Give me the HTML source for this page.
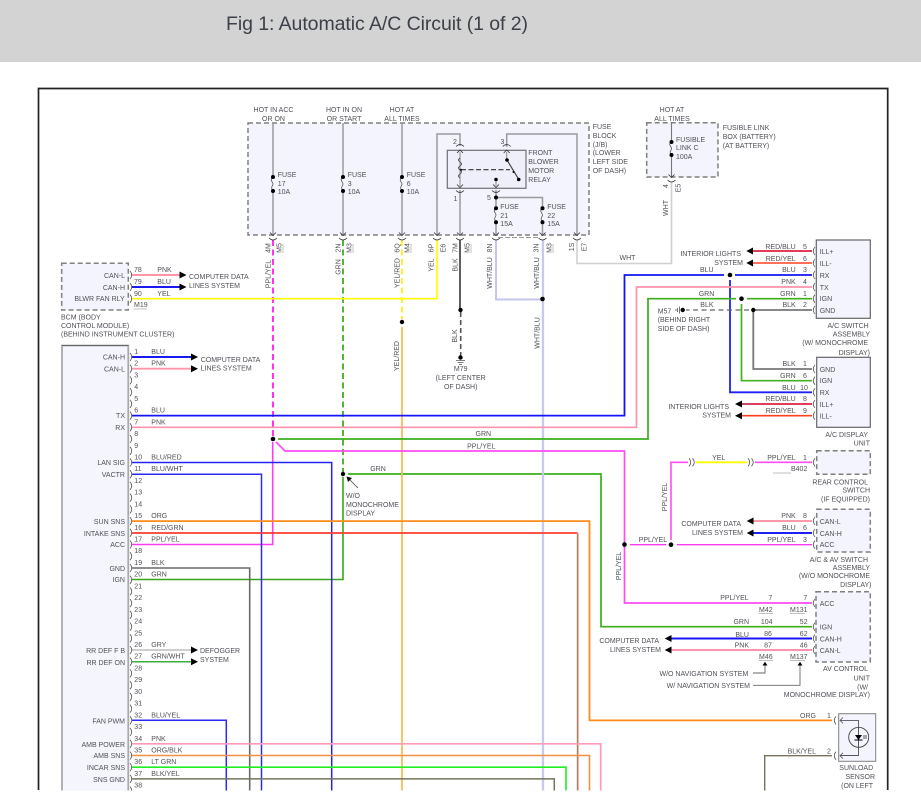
<!DOCTYPE html>
<html><head><meta charset="utf-8"><title>Fig 1: Automatic A/C Circuit (1 of 2)</title>
<style>
html,body{margin:0;padding:0;background:#fff;width:921px;height:811px;overflow:hidden}
svg{display:block;position:absolute;left:0;top:0}
text{font-family:"Liberation Sans",Arial,sans-serif;font-size:7px;fill:#505058}
.r{text-anchor:end}.m{text-anchor:middle}
.t{font-size:19.5px;fill:#3c4048}
path,line,polyline{fill:none}
.g{stroke:#9a9a9e;stroke-width:1.5}
.k{stroke:#333;stroke-width:.8}
.c{stroke:#555;stroke-width:.8}
.d{stroke:#808080;stroke-width:1.5;stroke-dasharray:5 3}
.f{fill:#000;stroke:none}
.u{stroke:#aaa;stroke-width:.7}
.b{filter:blur(.3px)}
</style></head><body>
<svg width="921" height="811" viewBox="0 0 921 811" xmlns="http://www.w3.org/2000/svg">
<rect x="0" y="0" width="921" height="62" fill="#d3d3d3"/>
<text class="t" x="226" y="30" textLength="302">Fig 1: Automatic A/C Circuit (1 of 2)</text>
<g class="b">
<path d="M38.5 790V88.5H887.7V790" stroke="#222" stroke-width="1.7"/>

<!-- boxes -->
<rect x="248" y="123" width="341" height="112" class="d" style="fill:#f3f4fd"/>
<rect x="646.7" y="122.7" width="71.3" height="54.3" class="d" style="fill:#f3f4fd"/>
<rect x="61.7" y="263.3" width="66.6" height="46.7" class="d" style="fill:#f3f4fd"/>
<rect x="62" y="345.5" width="66.3" height="446" style="fill:#f4f5fd;stroke:none"/>
<path d="M62 791V345.5H128.3V791" stroke="#a8a8ae" stroke-width="1.8"/>
<path d="M62 345.5H128.3" stroke="#666" stroke-width="1"/>
<rect x="447.3" y="150.3" width="78.7" height="38" style="fill:#eeeffa;stroke:#707074;stroke-width:1.2"/>
<rect x="816.3" y="240" width="54" height="78.3" style="fill:#f3f4fd;stroke:#66666a;stroke-width:1.2"/>
<rect x="816.7" y="357.3" width="53.6" height="70" style="fill:#f3f4fd;stroke:#66666a;stroke-width:1.2"/>
<rect x="816.7" y="450.7" width="53.6" height="23.6" class="d" style="fill:#f3f4fd"/>
<rect x="816.7" y="509.3" width="53.6" height="42.7" class="d" style="fill:#f3f4fd"/>
<rect x="816" y="591.7" width="54.3" height="70.3" class="d" style="fill:#f3f4fd"/>
<rect x="838.7" y="713.7" width="37" height="47.6" style="fill:#f3f4fd;stroke:#808084;stroke-width:1"/>

<!-- fuse block internal wires -->
<path class="g" d="M273 123V235M343 123V235M402 123V235M437 235V134H460V146M506.7 147V134H577V235M460 190V235M496 190V235M496 197.5H542.5V235"/>
<path d="M671.5 123V177" stroke="#77777b" stroke-width="1.1"/>
<path d="M460 152V186" stroke="#888" stroke-width="1"/>
<path d="M460 158q-3 2 0 4q3 2 0 4q-3 2 0 4q3 2 0 4q-3 2 0 4" stroke="#555" stroke-width="1"/>
<path d="M461 169.7H510" stroke="#333" stroke-width="1.2" stroke-dasharray="5 2.5"/>
<path d="M507 160L518.7 179.3" stroke="#444" stroke-width="1.2"/>
<path d="M506.7 152V160M496 180V186" stroke="#888" stroke-width="1"/>
<circle class="f" cx="507" cy="160" r="1.8"/><circle class="f" cx="518.7" cy="179.5" r="1.8"/><circle class="f" cx="496" cy="179.5" r="1.8"/><circle class="f" cx="513.5" cy="172" r="1"/><circle class="f" cx="461" cy="169.7" r="1"/>

<!-- fuses -->
<path fill="none" stroke="#f3f4fd" stroke-width="2" d="M273 179V189M343 179V189M402 179V189M496 210V220M542.5 210V220M671.5 144V153"/>
<path class="c" stroke-width="1" d="M273 177c-4 3 0 5 0 7s-3 3 0 7M343 177c-4 3 0 5 0 7s-3 3 0 7M402 177c-4 3 0 5 0 7s-3 3 0 7M496 208c-4 3 0 5 0 7s-3 3 0 7M542.5 208c-4 3 0 5 0 7s-3 3 0 7M671.5 142c-4 3 0 4 0 6.5s-3 3 0 6.5"/>
<circle class="f" cx="273" cy="177" r="2"/><circle class="f" cx="273" cy="191" r="2"/>
<circle class="f" cx="343" cy="177" r="2"/><circle class="f" cx="343" cy="191" r="2"/>
<circle class="f" cx="402" cy="177" r="2"/><circle class="f" cx="402" cy="191" r="2"/>
<circle class="f" cx="496" cy="197.5" r="2"/><circle class="f" cx="496" cy="208.3" r="2"/><circle class="f" cx="496" cy="222.3" r="2"/>
<circle class="f" cx="542.5" cy="208.3" r="2"/><circle class="f" cx="542.5" cy="222.3" r="2"/>
<circle class="f" cx="671.5" cy="142" r="2"/><circle class="f" cx="671.5" cy="155" r="2"/>

<!-- wires -->
<path d="M577 240V263.5H671.5V182" stroke="#d0d0d0" stroke-width="1.6"/>
<path d="M460 240V309" stroke="#555" stroke-width="1.9"/>
<path d="M460.7 312V356" stroke="#555" stroke-width="1.6" stroke-dasharray="5 3"/>
<circle class="f" cx="460.5" cy="310" r="2.2"/><circle class="f" cx="460.5" cy="357.5" r="2.2"/>
<path d="M456 360.5H465M457.5 362.5H463.5M459 364.5H462" stroke="#555" stroke-width=".8"/>
<path d="M273 240V436" stroke="#ff2af0" stroke-width="1.9" stroke-dasharray="6 3.5"/>
<path d="M272.7 442V544.5H132" stroke="#ff3cf0" stroke-width="1.6"/>
<path d="M343 240V472" stroke="#3aa51a" stroke-width="1.7" stroke-dasharray="6 3.5"/>
<path d="M343 477V579.5H132" stroke="#3aa51a" stroke-width="1.6"/>
<path d="M348 474H601V626.7H812" stroke="#3cae1c" stroke-width="1.7"/>
<circle class="f" cx="343" cy="474" r="2.2"/>
<path d="M132 462.5H331.7V791" stroke="#2424f0" stroke-width="1.5"/>
<path d="M132 474.2H261.5V791" stroke="#2a2af0" stroke-width="1.5"/>
<path d="M402 240V319" stroke="#ffee10" stroke-width="1.7" stroke-dasharray="6 3.5"/>
<path d="M402 327V791" stroke="#ffb850" stroke-width="1.7"/>
<circle class="f" cx="402" cy="322" r="2.2"/>
<path d="M132 298.7H437V240" stroke="#ffff00" stroke-width="1.7"/>
<path d="M496 240V299.5H541" stroke="#c4c4ee" stroke-width="1.9"/>
<path d="M543 240V791" stroke="#c8c8f2" stroke-width="2.3"/>
<circle class="f" cx="542.5" cy="299" r="2.3"/>
<path d="M498 237.5H540" stroke="#999" stroke-width="1" stroke-dasharray="5 2"/>
<path d="M132 415.6H624.5V275H724" stroke="#1414f5" stroke-width="1.8"/>
<path d="M735 275H812" stroke="#1414f5" stroke-width="1.8"/>
<path d="M730 280V392.3H812" stroke="#2020f5" stroke-width="1.8"/>
<circle class="f" cx="730" cy="275" r="2.3"/>
<path d="M132 427.3H636.5V287H812" stroke="#ff92ac" stroke-width="1.7"/>
<path d="M278 439H648V298.7H736" stroke="#3cae1c" stroke-width="1.7"/>
<path d="M747 298.7H812" stroke="#3cae1c" stroke-width="1.7"/>
<path d="M741.5 304V380.7H812" stroke="#44b024" stroke-width="1.7"/>
<circle class="f" cx="273" cy="439" r="2.3"/><circle class="f" cx="741.5" cy="298.7" r="2.3"/>
<path d="M276 442L285 451H624.5V603H812" stroke="#ff4cf0" stroke-width="1.7"/>
<circle class="f" cx="624.5" cy="544.5" r="2.3"/>
<path d="M630 544.7H666M677 544.7H812" stroke="#ff3cf0" stroke-width="1.4"/>
<path d="M671 540V462.3H688M755 462.3H812" stroke="#ff4cf0" stroke-width="1.6"/>
<path d="M696 462.3H747" stroke="#ffff00" stroke-width="1.9"/>
<circle class="f" cx="671" cy="544.7" r="2.3"/>
<path d="M812 310H753.3V369H812" stroke="#77777b" stroke-width="1.8"/>
<path d="M749 310H686" stroke="#666" stroke-width="1.3" stroke-dasharray="5 3.5"/>
<circle class="f" cx="753.3" cy="310" r="2.2"/><circle class="f" cx="682.7" cy="310" r="2.2"/>
<path d="M679.5 306.5V313.5M677.5 308V312M676 309V311" stroke="#555" stroke-width=".8"/>
<path d="M753 251H812M753 404H812" stroke="#e02040" stroke-width="1.8"/>
<path d="M753 263H812M742 415.7H812" stroke="#ff4020" stroke-width="1.6"/>
<path d="M742 404H753" stroke="#c84868" stroke-width="2"/>
<path d="M753 521H812" stroke="#ff98a8" stroke-width="1.9"/>
<path d="M753 533H812" stroke="#2020f5" stroke-width="2.1"/>
<path d="M671 638.5H812" stroke="#1414f5" stroke-width="1.9"/>
<path d="M671 650H812" stroke="#ff92ac" stroke-width="1.9"/>
<path d="M132 521.1H589.5V720.4H832" stroke="#ff8c1a" stroke-width="1.8"/>
<path d="M132 533H577.7" stroke="#ff3c30" stroke-width="1.8"/>
<path d="M577.7 533V791" stroke="#ff9090" stroke-width="2"/>
<path d="M577.7 534V791" stroke="#5c8a50" stroke-width=".7"/>
<path d="M132 568H249.7V791" stroke="#6a6a6a" stroke-width="1.6"/>
<path d="M132 650H192" stroke="#bdbdbd" stroke-width="1.6"/>
<path d="M132 661.7H192" stroke="#3cae3c" stroke-width="1.5"/>
<path d="M132 720.3H226.3V791" stroke="#2a2af0" stroke-width="1.5"/>
<path d="M132 743.8H600.7V791" stroke="#ff9cb8" stroke-width="1.7"/>
<path d="M132 755.5H589.5V791" stroke="#f09040" stroke-width="1.6"/>
<path d="M132 767.2H566V791" stroke="#22ee22" stroke-width="1.6"/>
<path d="M132 778.9H554.3V791" stroke="#74745c" stroke-width="1.5"/>
<path d="M832 755.7H764.7V791" stroke="#77745c" stroke-width="1.4"/>
<path d="M132 275H180M132 368.7H191" stroke="#ff96a8" stroke-width="1.9"/>
<path d="M132 287H180M132 357H191" stroke="#1a1af0" stroke-width="1.9"/>

<!-- arrows -->
<path class="f" d="M179.5 271.5L186.5 275L179.5 278.5ZM179.5 283.5L186.5 287L179.5 290.5ZM191 353.5L198 357L191 360.5ZM191 365.2L198 368.7L191 372.2ZM191 646.5L198 650L191 653.5ZM191 658.2L198 661.7L191 665.2Z"/>
<path class="f" d="M746.3 251L753 247.5V254.5ZM746.3 263L753 259.5V266.5ZM735 404L742 400.5V407.5ZM735 415.7L742 412.2V419.2ZM746.7 521L753.5 517.5V524.5ZM746.7 533L753.5 529.5V536.5ZM664.7 638.5L671.5 635V642ZM664.7 650L671.5 646.5V653.5Z"/>

<!-- connectors: left pins -->
<path class="c" d="M130 353q3.5 4 0 8M130 364.7q3.5 4 0 8M130 376.4q3.5 4 0 8M130 388.2q3.5 4 0 8M130 399.9q3.5 4 0 8M130 411.6q3.5 4 0 8M130 423.3q3.5 4 0 8M130 435q3.5 4 0 8M130 446.8q3.5 4 0 8M130 458.5q3.5 4 0 8M130 470.2q3.5 4 0 8M130 481.9q3.5 4 0 8M130 493.6q3.5 4 0 8M130 505.4q3.5 4 0 8M130 517.1q3.5 4 0 8M130 528.8q3.5 4 0 8M130 540.5q3.5 4 0 8M130 552.2q3.5 4 0 8M130 564q3.5 4 0 8M130 575.7q3.5 4 0 8M130 587.4q3.5 4 0 8M130 599.1q3.5 4 0 8M130 610.8q3.5 4 0 8M130 622.6q3.5 4 0 8M130 634.3q3.5 4 0 8M130 646q3.5 4 0 8M130 657.7q3.5 4 0 8M130 669.4q3.5 4 0 8M130 681.2q3.5 4 0 8M130 692.9q3.5 4 0 8M130 704.6q3.5 4 0 8M130 716.3q3.5 4 0 8M130 728q3.5 4 0 8M130 739.8q3.5 4 0 8M130 751.5q3.5 4 0 8M130 763.2q3.5 4 0 8M130 774.9q3.5 4 0 8M130 786.6q3.5 4 0 8"/>
<path class="c" d="M130 271q3.5 4 0 8M130 283q3.5 4 0 8M130 294.7q3.5 4 0 8"/>
<!-- right pins -->
<path class="c" d="M815 247q-3.5 4 0 8M815 259q-3.5 4 0 8M815 271q-3.5 4 0 8M815 283q-3.5 4 0 8M815 294.7q-3.5 4 0 8M815 306q-3.5 4 0 8M815 365q-3.5 4 0 8M815 376.7q-3.5 4 0 8M815 388.3q-3.5 4 0 8M815 400q-3.5 4 0 8M815 411.7q-3.5 4 0 8M815 458.3q-3.5 4 0 8M815 517q-3.5 4 0 8M815 529q-3.5 4 0 8M815 540.7q-3.5 4 0 8M815 599q-3.5 4 0 8M815 622.7q-3.5 4 0 8M815 634.5q-3.5 4 0 8M815 646q-3.5 4 0 8M836 716.4q-3.5 4 0 8M836 751.7q-3.5 4 0 8"/>
<path class="c" d="M689 458.3q3.5 4 0 8M692.5 458.3q3.5 4 0 8M748 458.3q3.5 4 0 8M751.5 458.3q3.5 4 0 8"/>
<!-- fuse block connectors -->
<path class="k" d="M270 232.5l3 3 3-3M340 232.5l3 3 3-3M399 232.5l3 3 3-3M434 232.5l3 3 3-3M457 232.5l3 3 3-3M493 232.5l3 3 3-3M539.5 232.5l3 3 3-3M574 232.5l3 3 3-3M668.5 174.5l3 3 3-3"/>
<path class="k" d="M269 238q4 4 8 0M339 238q4 4 8 0M398 238q4 4 8 0M433 238q4 4 8 0M456 238q4 4 8 0M492 238q4 4 8 0M538.5 238q4 4 8 0M573 238q4 4 8 0M667.5 180q4 4 8 0"/>
<path class="k" d="M456 146.5q4-4 8 0M502.7 146.5q4-4 8 0M456 190.5q4 4 8 0M492 190.5q4 4 8 0M457 153l3-3 3 3M503.7 153l3-3 3 3M457 184.5l3 3 3-3M493 184.5l3 3 3-3"/>

<!-- sunload sensor -->
<path d="M840 720.4H858.5V755.5H840" stroke="#55555a" stroke-width=".9"/>
<path class="c" d="M843 717.5l-3 2.9 3 2.9M843 752.8l-3 2.9 3 2.9"/>
<circle cx="858.7" cy="737.3" r="10" stroke="#444" stroke-width=".9" fill="#f3f4fd"/>
<path d="M858.5 727.5V747" stroke="#444" stroke-width=".9"/>
<path class="f" d="M855 735H862L858.5 740Z"/><path d="M854.5 740H862.5" stroke="#000" stroke-width="1"/>
<path d="M864 735V739M866 735V739" stroke="#333" stroke-width=".8"/>

<!-- nav leaders -->
<path d="M753 673H765V665M753 685.3H800V665" stroke="#666" stroke-width=".9"/>
<path class="f" d="M765 661.7L767.5 665.5H762.5ZM800 661.7L802.5 665.5H797.5Z"/>
<path d="M358 488L348 478" stroke="#444" stroke-width=".8"/>
<path class="f" d="M346.5 476.5L352 478L348 482Z"/>

<!-- underlines -->
<path class="u" d="M134 309H147M773 473H791M759 613.5H773M790 613.5H805M759 660.5H773M790 660.5H805M283 244V253M353 244V253M411 244V253M471 244V253M553 244V253"/>

<!-- top texts -->
<text class="m" x="273.5" y="112">HOT IN ACC</text><text class="m" x="273.5" y="121">OR ON</text>
<text class="m" x="344" y="112">HOT IN ON</text><text class="m" x="344" y="121">OR START</text>
<text class="m" x="402" y="112">HOT AT</text><text class="m" x="402" y="121">ALL TIMES</text>
<text class="m" x="672" y="112">HOT AT</text><text class="m" x="672" y="121">ALL TIMES</text>
<text x="277.7" y="177">FUSE</text><text x="277.7" y="186">17</text><text x="277.7" y="194">10A</text>
<text x="347.7" y="177">FUSE</text><text x="347.7" y="186">3</text><text x="347.7" y="194">10A</text>
<text x="406.7" y="177">FUSE</text><text x="406.7" y="186">6</text><text x="406.7" y="194">10A</text>
<text x="528.3" y="155">FRONT</text><text x="528.3" y="164">BLOWER</text><text x="528.3" y="173">MOTOR</text><text x="528.3" y="182">RELAY</text>
<text x="453" y="144">2</text><text x="500.5" y="144">3</text><text x="453.5" y="201">1</text><text x="487" y="200">5</text>
<text x="500.3" y="209">FUSE</text><text x="500.3" y="218">21</text><text x="500.3" y="226">15A</text>
<text x="547.3" y="209">FUSE</text><text x="547.3" y="218">22</text><text x="547.3" y="226">15A</text>
<text x="592.7" y="129">FUSE</text><text x="592.7" y="138">BLOCK</text><text x="592.7" y="147">(J/B)</text><text x="592.7" y="155">(LOWER</text><text x="592.7" y="164">LEFT SIDE</text><text x="592.7" y="173">OF DASH)</text>
<text x="676" y="142">FUSIBLE</text><text x="676" y="150">LINK C</text><text x="676" y="159">100A</text>
<text x="722.7" y="130">FUSIBLE LINK</text><text x="722.7" y="139">BOX (BATTERY)</text><text x="722.7" y="148">(AT BATTERY)</text>

<!-- rotated -->
<text class="m" transform="translate(270.3,248) rotate(-90)">4M</text><text class="m" transform="translate(281.5,248) rotate(-90)">M5</text><text class="m" transform="translate(270.3,274) rotate(-90)">PPL/YEL</text>
<text class="m" transform="translate(340.3,248) rotate(-90)">2N</text><text class="m" transform="translate(351.5,248) rotate(-90)">M3</text><text class="m" transform="translate(340.3,267) rotate(-90)">GRN</text>
<text class="m" transform="translate(399.3,248) rotate(-90)">6Q</text><text class="m" transform="translate(409.5,248) rotate(-90)">M4</text><text class="m" transform="translate(399.3,273) rotate(-90)">YEL/RED</text>
<text class="m" transform="translate(433.5,248) rotate(-90)">6P</text><text class="m" transform="translate(445.5,248) rotate(-90)">E6</text><text class="m" transform="translate(433.5,265) rotate(-90)">YEL</text>
<text class="m" transform="translate(457.5,248) rotate(-90)">7M</text><text class="m" transform="translate(469.5,248) rotate(-90)">M5</text><text class="m" transform="translate(457.5,265) rotate(-90)">BLK</text>
<text class="m" transform="translate(492.2,248) rotate(-90)">8N</text><text class="m" transform="translate(492.2,273) rotate(-90)">WHT/BLU</text>
<text class="m" transform="translate(538.7,248) rotate(-90)">3N</text><text class="m" transform="translate(551.5,248) rotate(-90)">M3</text><text class="m" transform="translate(539.2,273) rotate(-90)">WHT/BLU</text>
<text class="m" transform="translate(574.2,247) rotate(-90)">1S</text><text class="m" transform="translate(586.5,247) rotate(-90)">E7</text>
<text class="m" transform="translate(399.2,356) rotate(-90)">YEL/RED</text>
<text class="m" transform="translate(457.2,336) rotate(-90)">BLK</text>
<text class="m" transform="translate(539.5,333) rotate(-90)">WHT/BLU</text>
<text class="m" transform="translate(668.2,186) rotate(-90)">4</text><text class="m" transform="translate(680.5,188) rotate(-90)">E5</text>
<text class="m" transform="translate(668.2,208) rotate(-90)">WHT</text>
<text class="m" transform="translate(667.2,497) rotate(-90)">PPL/YEL</text>
<text class="m" transform="translate(621.2,566) rotate(-90)">PPL/YEL</text>
<text class="m" x="627.5" y="260">WHT</text>

<!-- a/c switch -->
<text class="r" x="741" y="256">INTERIOR LIGHTS</text><text class="r" x="743" y="265">SYSTEM</text>
<text class="r" x="795.7" y="249">RED/BLU</text><text class="m" x="805" y="249">5</text>
<text class="r" x="795.7" y="261">RED/YEL</text><text class="m" x="805" y="261">6</text>
<text x="700" y="272">BLU</text><text class="r" x="795.7" y="272">BLU</text><text class="m" x="805" y="272">3</text>
<text class="r" x="795.7" y="284">PNK</text><text class="m" x="805" y="284">4</text>
<text x="698.7" y="296">GRN</text><text class="r" x="795.7" y="296">GRN</text><text class="m" x="805" y="296">1</text>
<text x="700.3" y="307">BLK</text><text class="r" x="795.7" y="307">BLK</text><text class="m" x="805" y="307">2</text>
<text x="819.7" y="254">ILL+</text><text x="819.7" y="266">ILL-</text><text x="819.7" y="278">RX</text><text x="819.7" y="290">TX</text><text x="819.7" y="301">IGN</text><text x="819.7" y="313">GND</text>
<text x="657.7" y="313.5">M57</text><text x="657.7" y="322">(BEHIND RIGHT</text><text x="657.7" y="331">SIDE OF DASH)</text>
<text class="r" x="868.7" y="328">A/C SWITCH</text><text class="r" x="870" y="336.5">ASSEMBLY</text><text class="r" x="868" y="345">(W/ MONOCHROME</text><text class="r" x="870" y="355">DISPLAY)</text>

<!-- a/c display -->
<text class="r" x="795.7" y="366">BLK</text><text class="m" x="805" y="366">1</text>
<text class="r" x="795.7" y="378">GRN</text><text class="m" x="805" y="378">6</text>
<text class="r" x="795.7" y="390">BLU</text><text class="m" x="804" y="390">10</text>
<text class="r" x="795.7" y="401">RED/BLU</text><text class="m" x="805" y="401">8</text>
<text class="r" x="795.7" y="413">RED/YEL</text><text class="m" x="805" y="413">9</text>
<text x="819.7" y="372">GND</text><text x="819.7" y="383">IGN</text><text x="819.7" y="395">RX</text><text x="819.7" y="407">ILL+</text><text x="819.7" y="418.5">ILL-</text>
<text class="r" x="729" y="409">INTERIOR LIGHTS</text><text class="r" x="731" y="417.5">SYSTEM</text>
<text class="r" x="868" y="437">A/C DISPLAY</text><text class="r" x="870" y="445.5">UNIT</text>

<!-- rear control -->
<text class="r" x="795.7" y="460">PPL/YEL</text><text class="m" x="805" y="460">1</text>
<text class="m" x="718.7" y="460">YEL</text><text x="791" y="471">B402</text>
<text class="r" x="868" y="484.5">REAR CONTROL</text><text class="r" x="870" y="492.5">SWITCH</text><text class="r" x="870" y="501.5">(IF EQUIPPED)</text>
<text x="638.7" y="542">PPL/YEL</text>
<text class="r" x="795.7" y="518">PNK</text><text class="m" x="805" y="518">8</text>
<text class="r" x="795.7" y="530">BLU</text><text class="m" x="805" y="530">6</text>
<text class="r" x="795.7" y="542">PPL/YEL</text><text class="m" x="805" y="542">3</text>
<text class="r" x="741" y="526">COMPUTER DATA</text><text class="r" x="743" y="535">LINES SYSTEM</text>
<text x="819.7" y="524">CAN-L</text><text x="819.7" y="536">CAN-H</text><text x="819.7" y="547">ACC</text>
<text class="r" x="868" y="562">A/C &amp; AV SWITCH</text><text class="r" x="870" y="570">ASSEMBLY</text><text class="r" x="870" y="578">(W/O MONOCHROME</text><text class="r" x="871.5" y="587">DISPLAY)</text>

<!-- av control -->
<text class="r" x="748.7" y="600">PPL/YEL</text><text class="m" x="770.3" y="600">7</text><text class="m" x="805.3" y="600">7</text>
<text x="759" y="612">M42</text><text x="790" y="612">M131</text>
<text class="r" x="749" y="624">GRN</text><text class="m" x="766.7" y="624">104</text><text class="m" x="803.7" y="624">52</text>
<text class="r" x="749" y="637">BLU</text><text class="m" x="768" y="636">86</text><text class="m" x="803.7" y="636">62</text>
<text class="r" x="749" y="647.5">PNK</text><text class="m" x="768" y="647.5">87</text><text class="m" x="803.7" y="647.5">46</text>
<text x="759" y="659">M46</text><text x="790" y="659">M137</text>
<text x="819.7" y="606">ACC</text><text x="819.7" y="629.5">IGN</text><text x="819.7" y="641.5">CAN-H</text><text x="819.7" y="653">CAN-L</text>
<text class="r" x="659" y="643">COMPUTER DATA</text><text class="r" x="661" y="652">LINES SYSTEM</text>
<text class="r" x="748.3" y="676">W/O NAVIGATION SYSTEM</text><text class="r" x="750" y="688">W/ NAVIGATION SYSTEM</text>
<text class="r" x="868" y="671">AV CONTROL</text><text class="r" x="870" y="680.5">UNIT</text><text class="r" x="868" y="689.5">(W/</text><text class="r" x="870" y="697">MONOCHROME DISPLAY)</text>
<text class="r" x="816" y="718">ORG</text><text class="m" x="829" y="718">1</text>
<text class="r" x="816" y="753.5">BLK/YEL</text><text class="m" x="829" y="753.5">2</text>
<text x="839.3" y="770">SUNLOAD</text><text class="r" x="875" y="779">SENSOR</text><text class="r" x="873" y="788">(ON LEFT</text>

<!-- BCM upper -->
<text class="r" x="125" y="278">CAN-L</text><text class="r" x="125" y="290">CAN-H</text><text class="r" x="124.7" y="301">BLWR FAN RLY</text>
<text x="134" y="272">78</text><text x="157.3" y="272">PNK</text><text x="134" y="284">79</text><text x="157.3" y="284">BLU</text><text x="134" y="296">90</text><text x="157.3" y="296">YEL</text><text x="134" y="307">M19</text>
<text x="189" y="279">COMPUTER DATA</text><text x="189" y="288">LINES SYSTEM</text>
<text x="61" y="319.5">BCM (BODY</text><text x="61" y="328">CONTROL MODULE)</text><text x="61" y="336.5">(BEHIND INSTRUMENT CLUSTER)</text>

<!-- BCM pin labels -->
<text class="r" x="125" y="359.5">CAN-H</text><text class="r" x="125" y="371.5">CAN-L</text><text class="r" x="125" y="418">TX</text><text class="r" x="125" y="430">RX</text><text class="r" x="125" y="465">LAN SIG</text><text class="r" x="125" y="477">VACTR</text><text class="r" x="125" y="524">SUN SNS</text><text class="r" x="125" y="536">INTAKE SNS</text><text class="r" x="125" y="547">ACC</text><text class="r" x="125" y="571">GND</text><text class="r" x="125" y="582">IGN</text><text class="r" x="125" y="653">RR DEF F B</text><text class="r" x="125" y="665">RR DEF ON</text><text class="r" x="125" y="723.5">FAN PWM</text><text class="r" x="125" y="747">AMB POWER</text><text class="r" x="125" y="758">AMB SNS</text><text class="r" x="125" y="770">INCAR SNS</text><text class="r" x="125" y="782">SNS GND</text>

<!-- pin numbers -->
<text x="134.3" y="354">1</text><text x="134.3" y="365.7">2</text><text x="134.3" y="377.4">3</text><text x="134.3" y="389.2">4</text><text x="134.3" y="400.9">5</text><text x="134.3" y="412.6">6</text><text x="134.3" y="424.3">7</text><text x="134.3" y="436">8</text><text x="134.3" y="447.8">9</text><text x="134.3" y="459.5">10</text><text x="134.3" y="471.2">11</text><text x="134.3" y="482.9">12</text><text x="134.3" y="494.6">13</text><text x="134.3" y="506.4">14</text><text x="134.3" y="518.1">15</text><text x="134.3" y="529.8">16</text><text x="134.3" y="541.5">17</text><text x="134.3" y="553.2">18</text><text x="134.3" y="565">19</text><text x="134.3" y="576.7">20</text><text x="134.3" y="588.4">21</text><text x="134.3" y="600.1">22</text><text x="134.3" y="611.8">23</text><text x="134.3" y="623.6">24</text><text x="134.3" y="635.3">25</text><text x="134.3" y="647">26</text><text x="134.3" y="658.7">27</text><text x="134.3" y="670.4">28</text><text x="134.3" y="682.2">29</text><text x="134.3" y="693.9">30</text><text x="134.3" y="705.6">31</text><text x="134.3" y="717.3">32</text><text x="134.3" y="729">33</text><text x="134.3" y="740.8">34</text><text x="134.3" y="752.5">35</text><text x="134.3" y="764.2">36</text><text x="134.3" y="775.9">37</text><text x="134.3" y="787.6">38</text>

<!-- wire names -->
<text x="151.3" y="354">BLU</text><text x="151.3" y="365.7">PNK</text><text x="151.3" y="412.6">BLU</text><text x="151.3" y="424.3">PNK</text><text x="151.3" y="459.5">BLU/RED</text><text x="151.3" y="471.2">BLU/WHT</text><text x="151.3" y="518.1">ORG</text><text x="151.3" y="529.8">RED/GRN</text><text x="151.3" y="541.5">PPL/YEL</text><text x="151.3" y="565">BLK</text><text x="151.3" y="576.7">GRN</text><text x="151.3" y="647">GRY</text><text x="151.3" y="658.7">GRN/WHT</text><text x="151.3" y="717.3">BLU/YEL</text><text x="151.3" y="740.8">PNK</text><text x="151.3" y="752.5">ORG/BLK</text><text x="151.3" y="764.2">LT GRN</text><text x="151.3" y="775.9">BLK/YEL</text>

<text x="200.7" y="362">COMPUTER DATA</text><text x="200.7" y="370.5">LINES SYSTEM</text>
<text x="200" y="653">DEFOGGER</text><text x="200" y="662">SYSTEM</text>

<text class="m" x="483.3" y="436">GRN</text><text class="m" x="481.3" y="448.5">PPL/YEL</text><text class="m" x="378" y="471">GRN</text>
<text x="346" y="498">W/O</text><text x="346" y="507">MONOCHROME</text><text x="346" y="515.5">DISPLAY</text>
<text class="m" x="460.7" y="371">M79</text><text class="m" x="460.7" y="380">(LEFT CENTER</text><text class="m" x="460.7" y="389">OF DASH)</text>
</g>
<rect x="0" y="790.5" width="921" height="21" fill="#fff"/>
</svg>
</body></html>
